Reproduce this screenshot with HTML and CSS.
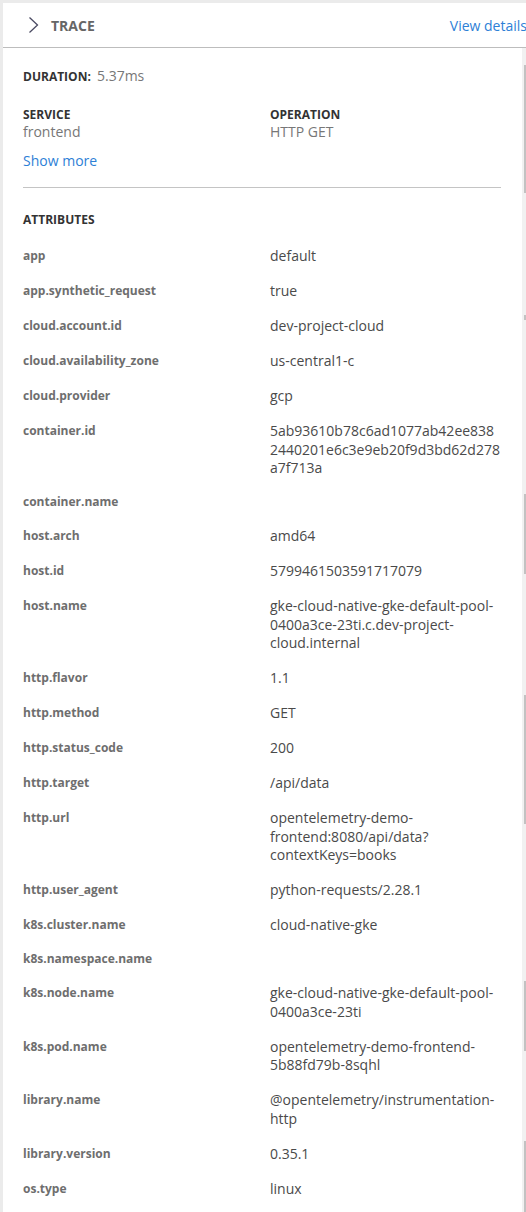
FILE: index.html
```html
<!DOCTYPE html>
<html lang="en">
<head>
<meta charset="utf-8">
<title>Trace</title>
<link rel="stylesheet" href="styles.css">
</head>
<body>
<div class="card">
  <header class="card-header">
    <svg class="chevron" width="12" height="18" viewBox="0 0 12 18" aria-hidden="true">
      <polyline points="1.5,1.5 9.5,9 1.5,16.5" fill="none" stroke="#4b4b63" stroke-width="1.3"/>
    </svg>
    <span class="title">TRACE</span>
    <a class="link view-details" href="#">View details</a>
  </header>
  <div class="card-body">
    <div class="content">
      <div class="duration"><span class="label">DURATION:</span> <span class="duration-value">5.37ms</span></div>
      <div class="summary">
        <div class="summary-item">
          <div class="label">SERVICE</div>
          <div class="summary-value">frontend</div>
        </div>
        <div class="summary-item">
          <div class="label">OPERATION</div>
          <div class="summary-value">HTTP GET</div>
        </div>
      </div>
      <a class="link show-more" href="#">Show more</a>
      <hr class="divider">
      <div class="label section-title">ATTRIBUTES</div>
      <dl class="attrs">
        <dt>app</dt><dd>default</dd>
        <dt>app.synthetic_request</dt><dd>true</dd>
        <dt>cloud.account.id</dt><dd>dev-project-cloud</dd>
        <dt>cloud.availability_zone</dt><dd>us-central1-c</dd>
        <dt>cloud.provider</dt><dd>gcp</dd>
        <dt>container.id</dt><dd>5ab93610b78c6ad1077ab42ee8382440201e6c3e9eb20f9d3bd62d278a7f713a</dd>
        <dt class="no-value">container.name</dt><dd></dd>
        <dt>host.arch</dt><dd>amd64</dd>
        <dt>host.id</dt><dd>5799461503591717079</dd>
        <dt>host.name</dt><dd>gke-cloud-native-gke-default-pool-0400a3ce-23ti.c.dev-project-cloud.internal</dd>
        <dt>http.flavor</dt><dd>1.1</dd>
        <dt>http.method</dt><dd>GET</dd>
        <dt>http.status_code</dt><dd>200</dd>
        <dt>http.target</dt><dd>/api/data</dd>
        <dt>http.url</dt><dd>opentelemetry-demo-frontend:8080/api/data?contextKeys=books</dd>
        <dt>http.user_agent</dt><dd>python-requests/2.28.1</dd>
        <dt>k8s.cluster.name</dt><dd>cloud-native-gke</dd>
        <dt class="no-value">k8s.namespace.name</dt><dd></dd>
        <dt>k8s.node.name</dt><dd>gke-cloud-native-gke-default-pool-0400a3ce-23ti</dd>
        <dt>k8s.pod.name</dt><dd>opentelemetry-demo-frontend-5b88fd79b-8sqhl</dd>
        <dt>library.name</dt><dd>@opentelemetry/instrumentation-http</dd>
        <dt>library.version</dt><dd>0.35.1</dd>
        <dt>os.type</dt><dd>linux</dd>
      </dl>
    </div>
    <div class="scroll-track" aria-hidden="true">
      <span class="thumb t1"></span>
      <span class="thumb t2"></span>
      <span class="thumb t3"></span>
      <span class="thumb t4"></span>
      <span class="thumb t5"></span>
      <span class="thumb t6"></span>
    </div>
  </div>
</div>
</body>
</html>
```
FILE: styles.css
```css
html, body {
  margin: 0;
  padding: 0;
  height: 1212px;
  overflow: hidden;
}
body {
  background: #ebebeb;
  padding: 3px 0 0 3px;
  box-sizing: border-box;
  font-family: "Open Sans", "Liberation Sans", sans-serif;
}
.card {
  background: #fff;
  width: 523px;
  height: 1209px;
  display: flex;
  flex-direction: column;
}
.card-header {
  height: 44px;
  flex: none;
  display: flex;
  align-items: center;
  padding-left: 25px;
  border-bottom: 1px solid #bdbdbd;
  white-space: nowrap;
}
.chevron {
  display: block;
  margin-top: -1px;
}
.title {
  margin-left: 11px;
  font-size: 14px;
  font-weight: 700;
  color: #666;
}
.link {
  color: #2d80d6;
  text-decoration: none;
  font-size: 14px;
}
.view-details {
  margin-left: auto;
  margin-right: -1px;
}
.card-body {
  flex: 1;
  display: flex;
  min-height: 0;
}
.content {
  flex: 1;
  padding: 18px 21px 0 20px;
  min-width: 0;
}
.label {
  font-size: 12px;
  font-weight: 700;
  color: #333;
}
.duration {
  line-height: 19px;
}
.duration-value {
  font-size: 14px;
  color: #777;
  margin-left: 2px;
}
.summary {
  display: grid;
  grid-template-columns: 247px 1fr;
  margin-top: 21px;
}
.summary-item .label {
  line-height: 15px;
}
.summary-value {
  font-size: 14px;
  line-height: 19px;
  color: #777;
}
.show-more {
  display: block;
  width: fit-content;
  margin-top: 10px;
  line-height: 19px;
}
.divider {
  border: 0;
  border-top: 1px solid #c4c4c4;
  margin: 17px 0 0;
}
.section-title {
  margin-top: 23px;
  line-height: 17px;
}
.attrs {
  display: grid;
  grid-template-columns: 247px 1fr;
  row-gap: 16.5px;
  margin: 19px 0 0;
}
.attrs dt {
  grid-column: 1;
  font-size: 12px;
  font-weight: 700;
  color: #6e6e6e;
  line-height: 17px;
}
.attrs dt.no-value {
  line-height: 16.5px;
}
.attrs dd {
  grid-column: 2;
  margin: 0;
  font-size: 14px;
  line-height: 18.5px;
  color: #4a4a4a;
  overflow-wrap: anywhere;
}
.attrs dd:empty {
  display: none;
}
.scroll-track {
  flex: none;
  width: 4px;
  background: #f1f1f1;
  position: relative;
}
.thumb {
  position: absolute;
  right: 0;
  width: 2px;
  background: #c2c2c2;
}
.t1 { top: 17px; height: 128px; }
.t2 { top: 267px; height: 5px; }
.t3 { top: 446px; height: 80px; }
.t4 { top: 647px; height: 129px; }
.t5 { top: 933px; height: 70px; }
.t6 { top: 1093px; height: 80px; }
```
